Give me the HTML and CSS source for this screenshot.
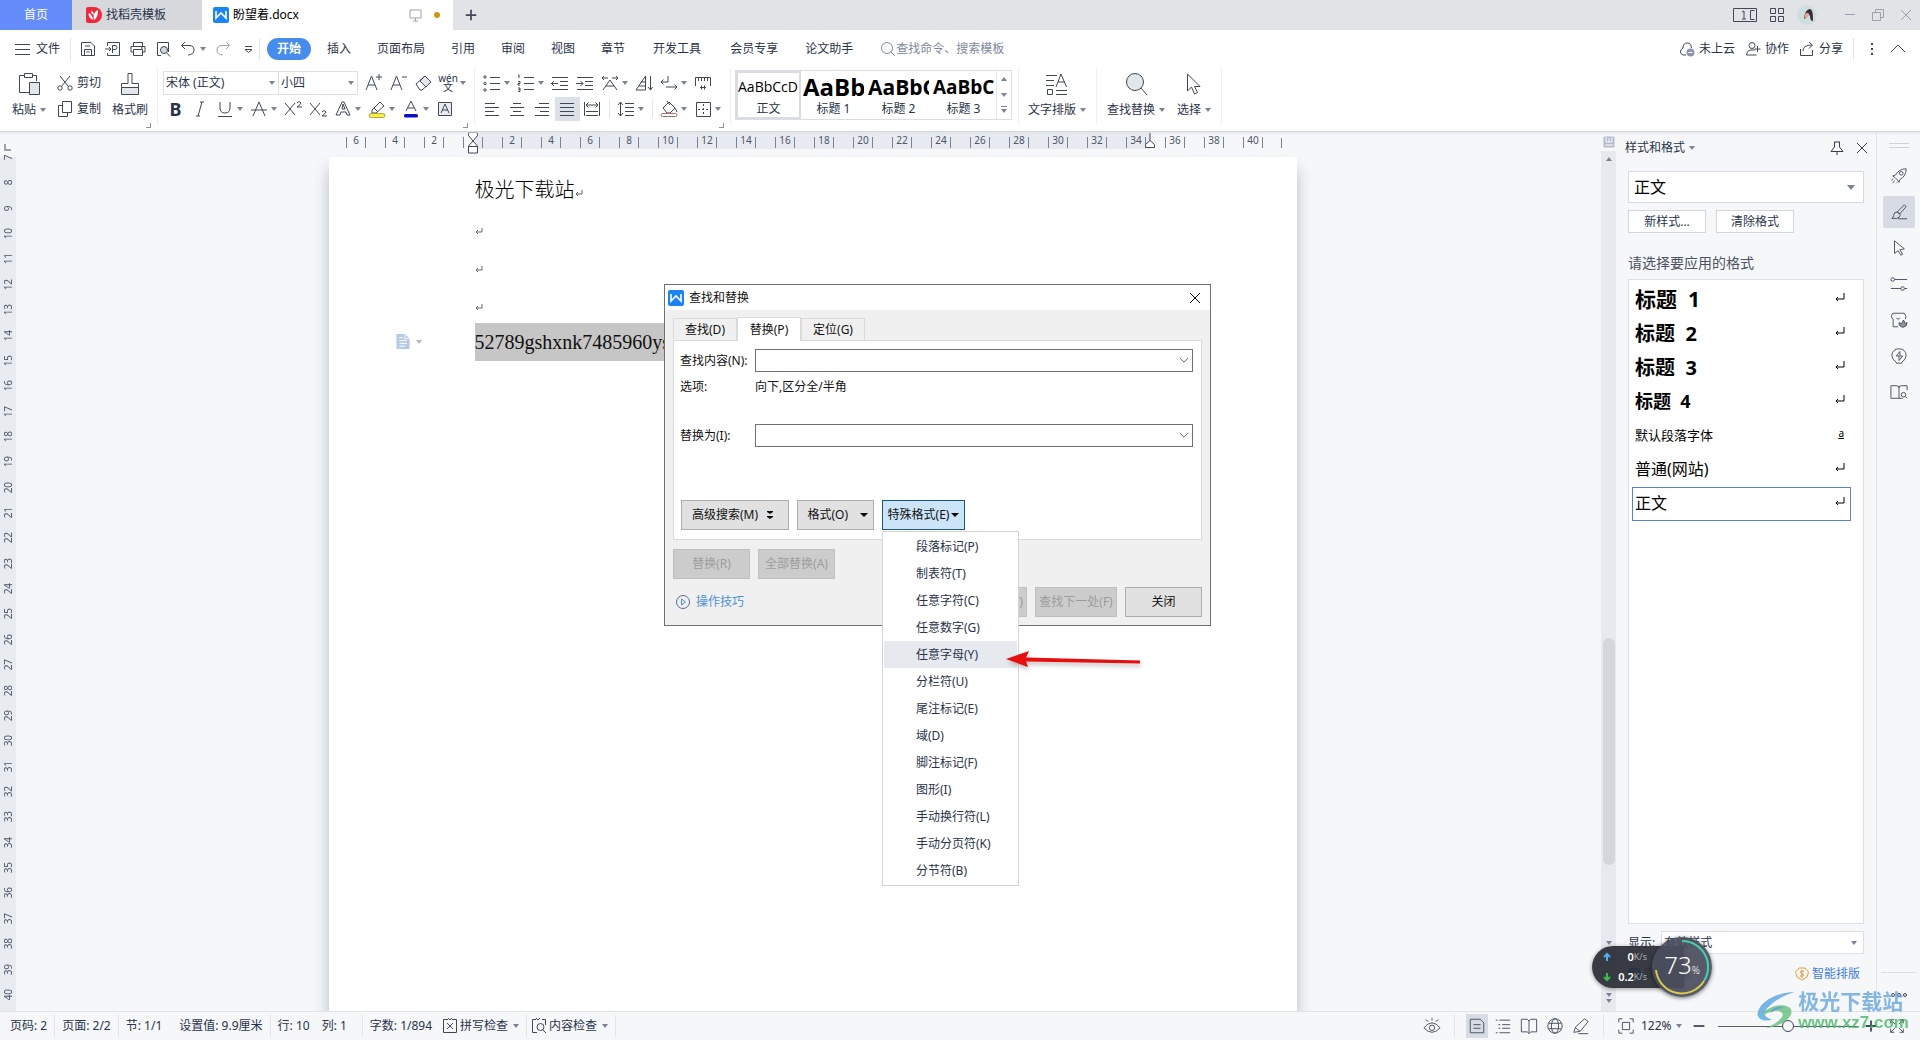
FILE: index.html
```html
<!DOCTYPE html>
<html lang="zh-CN">
<head>
<meta charset="utf-8">
<title>盼望着.docx</title>
<link rel="stylesheet" href="styles.css">
</head>
<body>
<div class="app">
<header class="titlebar">
  <button class="home-tab">首页</button>
  <button class="tab tab-docer"><svg class="logo" viewBox="0 0 16 16"><path d="M0 2q0-2 2-2h6a8 8 0 0 1 0 16H2q-2 0-2-2z" fill="#f2263d"/><path d="M7 13C3 11 2 8 3 6c2 1 4 4 4 7zM8 13C7 9 8 5 12 3c0 5-1 8-4 10zM5 4c2 0 3 2 3 4-2-1-3-2-3-4z" fill="#fff"/></svg>找稻壳模板</button>
  <button class="tab tab-active"><svg class="logo" viewBox="0 0 16 16"><rect width="16" height="16" rx="2" fill="#1c83f7"/><path d="M3 4v7l5-5 5 5V4" fill="none" stroke="#fff" stroke-width="1.6"/></svg><span class="grow">盼望着.docx</span><svg class="i16 faint" viewBox="0 0 16 16"><path d="M2 3h11v8H2zM7.500 11v3M5 14h5"/></svg><i class="unsaved"></i></button>
  <button class="new-tab" aria-label="新建"><svg class="i16 bold" viewBox="0 0 16 16"><path d="M8 2v12M2 8h12"/></svg></button>
  <div class="window-tools">
    <svg class="i24" viewBox="0 0 24 16"><path d="M.5 1.500h23v13H.5zM21.500 3.500h-4v9h4M9 5l2-1v8M9 12h4"/></svg>
    <svg class="i16" viewBox="0 0 16 16"><path d="M1.500 1.500h5v5h-5zM9.500 1.500h5v5h-5zM1.500 9.500h5v5h-5zM9.500 9.500h5v5h-5z"/></svg>
    <svg class="avatar" viewBox="0 0 20 20"><circle cx="10" cy="10" r="10" fill="#cfdedd"/><path d="M7 13c0-4 3-9 6-9 3 1 3 6 3 12-2 0-3-2-3-5l-2-3-3 6z" fill="#3a2c33"/><path d="M8 9q3-3 4 1l-3 4q-3-2-1-5z" fill="#dda793"/></svg>
    <i class="vline"></i>
    <button aria-label="最小化"><svg class="i16 faint" viewBox="0 0 16 16"><path d="M3 7.500h10"/></svg></button>
    <button aria-label="还原"><svg class="i16 faint" viewBox="0 0 16 16"><path d="M2.500 5.500h8v8h-8zM5.500 5V2.500h8v8H11"/></svg></button>
    <button aria-label="关闭"><svg class="i16 faint" viewBox="0 0 16 16"><path d="M3 3l10 10M13 3L3 13"/></svg></button>
  </div>
</header>

<nav class="menubar">
  <button class="file-menu"><svg class="i16" viewBox="0 0 16 16"><path d="M0 3.500h15M0 8.500h15M0 13.500h15"/></svg>文件</button>
  <i class="vline"></i>
  <div class="quick">
    <button aria-label="保存"><svg class="i16" viewBox="0 0 16 16"><path d="M1.500 1.500H11L14.500 5v9.500h-13zM4.500 14V8.500h7V14M5 5h5M6.500 11h3"/></svg></button>
    <button aria-label="输出PDF"><svg class="i16" viewBox="0 0 16 16"><path d="M2.500 5V1.500h12v13h-12V12M0 8h6M4 6l2 2-2 2M7.500 12V4.500H10q2 0 2 2t-2 2H8"/></svg></button>
    <button aria-label="打印"><svg class="i16" viewBox="0 0 16 16"><path d="M3.500 5V1.500h9V5M3 11H1V5.500h14V11h-2M3.500 8.500h9v6h-9zM11 7h2"/></svg></button>
    <button aria-label="打印预览"><svg class="i16" viewBox="0 0 16 16"><path d="M6 14.500H2.500v-13h11V11M12 12l3 3.500"/><circle cx="9" cy="9" r="3.500" fill="#d5d9e0"/></svg></button>
    <button class="dd" aria-label="撤销"><svg class="i16" viewBox="0 0 16 16"><path d="M5 1L1.500 4.500 5 8M2 4.500h7q5 0 5 4.500t-6 5"/></svg></button>
    <button aria-label="恢复"><svg class="i16 faint" viewBox="0 0 16 16"><path d="M11 1l3.500 3.500L11 8M14 4.500H7Q2 4.500 2 9t6 5"/></svg></button>
    <button aria-label="更多"><svg class="i16" viewBox="0 0 16 16"><path d="M5 5.500h7M5 8.500h7l-3.500 3z"/></svg></button>
  </div>
  <i class="vline"></i>
  <button class="menu on">开始</button>
  <button class="menu">插入</button><button class="menu">页面布局</button><button class="menu">引用</button><button class="menu">审阅</button><button class="menu">视图</button><button class="menu">章节</button><button class="menu wide">开发工具</button><button class="menu wide">会员专享</button><button class="menu">论文助手</button>
  <label class="search"><svg class="i16" viewBox="0 0 16 16"><circle cx="7" cy="7" r="5.500"/><path d="M11 11l4 4"/></svg><input type="text" placeholder="查找命令、搜索模板"></label>
  <div class="account">
    <button><svg class="i16" viewBox="0 0 16 16"><path d="M7 14H4q-3-1-2.500-4Q2 8 4 7q0-5 4.500-5Q12 2 12.500 7"/><circle cx="11.500" cy="11.500" r="4" fill="#8d97b0" stroke="none"/><path d="M9.500 11.500h4" stroke="#fff"/></svg>未上云</button>
    <button><svg class="i16" viewBox="0 0 16 16"><circle cx="7" cy="4.500" r="3"/><path d="M10 9H5q-3.500 1-3.500 5h10M12.500 5v6M9.500 8h6"/></svg>协作</button>
    <button><svg class="i16" viewBox="0 0 16 16"><path d="M1.500 8v6.500h12V9M4 10q0-6 9-6M10 1l3.500 3L10 7.500"/></svg>分享</button>
    <i class="vline"></i>
    <button aria-label="更多"><svg class="i16 dots" viewBox="0 0 16 16"><path d="M7 3h2M7 8h2M7 13h2"/></svg></button>
    <button aria-label="折叠"><svg class="i16" viewBox="0 0 16 16"><path d="M1 11l7-7 7 7"/></svg></button>
  </div>
</nav>

<section class="ribbon">
  <div class="group clip">
    <button class="big paste"><svg class="i24" viewBox="0 0 24 24"><path d="M8 3.500H2.500v17H12M16 3.500h3.500V9M7.500 1.500h8v4h-8z"/><path d="M12.500 10.500h10v12h-10z" fill="#e3e6ea"/></svg><span class="dd">粘贴</span></button>
    <div class="stack">
      <button class="line"><svg class="i16" viewBox="0 0 16 16"><path d="M3 1l8.500 10.500M13 1L4.500 11.500"/><circle cx="3" cy="13" r="2.200"/><circle cx="13" cy="13" r="2.200"/></svg>剪切</button>
      <button class="line"><svg class="i16" viewBox="0 0 16 16"><path d="M5.500.5h9v11h-9zM5 4.500H1.500v11h9V12"/></svg>复制</button>
    </div>
    <button class="big"><svg class="i24" viewBox="0 0 24 24"><path d="M3.500 16v-4.500H10v-10h4v10h6.500V16"/><path d="M3.500 15.500h17v7h-17z" fill="#e3e6ea"/></svg><span>格式刷</span></button>
    <i class="corner"></i>
  </div>
  <div class="group font-group">
    <div class="row">
      <div class="font-boxes"><span class="sel"><select aria-label="字体"><option>宋体 (正文)</option></select></span><span class="sel size"><select aria-label="字号"><option>小四</option></select></span></div>
      <button class="t" aria-label="增大字号"><svg viewBox="0 0 20 20"><path d="M3 17L8.500 3 14 17M5 12h7M16 1v6M13 4h6"/></svg></button>
      <button class="t" aria-label="减小字号"><svg viewBox="0 0 20 20"><path d="M3 17L8.500 3 14 17M5 12h7M14 4h5"/></svg></button>
      <button class="t" aria-label="清除格式"><svg viewBox="0 0 20 20"><path d="M3 11L12 3l6 6-9 8H7z"/><path d="M7 8l6 6 5-5-6-6z" fill="#e3e6ea"/></svg></button>
      <button class="t dd pinyin" aria-label="拼音指南"><span>wén<br>文</span></button>
    </div>
    <div class="row">
      <button class="t glyph"><b>B</b></button>
      <button class="t" aria-label="倾斜"><svg viewBox="0 0 20 20"><path d="M12 3L8 17M10 3h4M6 17h4"/></svg></button>
      <button class="t dd" aria-label="下划线"><svg viewBox="0 0 20 20"><path d="M5 3v6q0 5 5 5t5-5V3M3 17.500h14"/></svg></button>
      <button class="t dd" aria-label="删除线"><svg viewBox="0 0 20 20"><path d="M4 17l6-14 6 14M2 11h16"/></svg></button>
      <button class="t" aria-label="上标"><svg viewBox="0 0 20 20"><path d="M2 4l10 12M12 4L2 16M14 4q2-3 4 0 0 1-4 4h5"/></svg></button>
      <button class="t" aria-label="下标"><svg viewBox="0 0 20 20"><path d="M2 4l10 12M12 4L2 16M14 13q2-3 4 0 0 1-4 4h5"/></svg></button>
      <button class="t dd" aria-label="文字效果"><svg viewBox="0 0 20 20"><path d="M3 16L9 3h2l6 13h-3l-1-3H8l-1 3zM9 10h3l-2-5z"/></svg></button>
      <button class="t dd" aria-label="突出显示"><svg viewBox="0 0 20 20"><path d="M5 11l8-8 4 4-8 7H5zM7 9l4 4"/><rect x="2" y="14.500" width="16" height="4" rx="2" fill="#ffef3a" stroke="#77701f" stroke-width=".6"/></svg></button>
      <button class="t dd" aria-label="字体颜色"><svg viewBox="0 0 20 20"><path d="M5 12l5-10 5 10M7 9h6"/><rect x="3" y="15" width="14" height="3.500" rx="1.500" fill="#0a10c4" stroke="none"/></svg></button>
      <button class="t" aria-label="字符底纹"><svg viewBox="0 0 20 20"><path d="M3.500 3.500h13v13h-13z" fill="#e9ebef"/><path d="M6 14l4-9 4 9M7 11h6"/></svg></button>
    </div>
    <i class="corner"></i>
  </div>
  <div class="group para-group">
    <div class="row">
      <button class="t dd" aria-label="项目符号"><svg viewBox="0 0 20 20"><path d="M8 4.500h10M8 10.500h10M8 16.500h10"/><circle cx="3" cy="4" r="1.200"/><circle cx="3" cy="10.500" r="1.200"/><circle cx="3" cy="17" r="1.200"/></svg></button>
      <button class="t dd" aria-label="编号"><svg viewBox="0 0 20 20"><path d="M8 4.500h10M8 10.500h10M8 16.500h10M2 2h1v3M2 8.500h2v2H2v1.500h2M2 15h2v1.500H2.500M4 16.500v2H2"/></svg></button>
      <button class="t" aria-label="减少缩进"><svg viewBox="0 0 20 20"><path d="M2 4.500h16M10 8.500h8M10 12.500h8M2 16.500h16M1 10.500h7M4 8l-2.500 2.500L4 13"/></svg></button>
      <button class="t" aria-label="增加缩进"><svg viewBox="0 0 20 20"><path d="M2 4.500h16M10 8.500h8M10 12.500h8M2 16.500h16M1 10.500h7M5.500 8L8 10.500 5.500 13"/></svg></button>
      <button class="t dd" aria-label="中文版式"><svg viewBox="0 0 20 20"><path d="M3 17l7-10 7 10M6 13h8M2 5h6M12 5h6M4 3L2 5l2 2M16 3l2 2-2 2"/></svg></button>
      <button class="t" aria-label="排序"><svg viewBox="0 0 20 20"><path d="M11.500 3v14H2zM5 13h6M7 9h4M16.500 3v14M14 14l2.500 3 2-3"/></svg></button>
      <button class="t dd" aria-label="换行符"><svg viewBox="0 0 20 20"><path d="M9 3v6H2M4.500 6.500L2 9l2.500 2.500M7 14h11M15.500 11.500L18 14l-2.500 2.500"/></svg></button>
      <button class="t" aria-label="标尺"><svg viewBox="0 0 20 20"><path d="M2.500 13V4.500h15V13M5.500 5v3M8.500 5v3M11.500 5v3M14.500 5v3M7 14.500h6M8.500 12.500v4M11.500 12.500v4"/></svg></button>
    </div>
    <div class="row">
      <button class="t" aria-label="左对齐"><svg viewBox="0 0 20 20"><path d="M3 4.500h10M3 8.500h14M3 12.500h9M3 16.500h14"/></svg></button>
      <button class="t" aria-label="居中"><svg viewBox="0 0 20 20"><path d="M6 4.500h8M3 8.500h14M6 12.500h8M3 16.500h14"/></svg></button>
      <button class="t" aria-label="右对齐"><svg viewBox="0 0 20 20"><path d="M7 4.500h10M3 8.500h14M8 12.500h9M3 16.500h14"/></svg></button>
      <button class="t on" aria-label="两端对齐"><svg viewBox="0 0 20 20"><path d="M3 4.500h14M3 8.500h14M3 12.500h14M3 16.500h14"/></svg></button>
      <button class="t" aria-label="分散对齐"><svg viewBox="0 0 20 20"><path d="M2.500 3v14M17.500 3v14M4 12.500h12M4 16.500h12M4 6h12M6.500 3.500L4 6l2.500 2.500M13.500 3.500L16 6l-2.500 2.500"/></svg></button>
      <i class="vline small"></i>
      <button class="t dd" aria-label="行距"><svg viewBox="0 0 20 20"><path d="M9 4.500h9M9 8.500h9M9 12.500h9M9 16.500h9M4.500 3v14M2 6l2.500-3L7 6M2 14l2.500 3L7 14"/></svg></button>
      <i class="vline small"></i>
      <button class="t dd" aria-label="底纹"><svg viewBox="0 0 20 20"><path d="M4 9l6-6 6 6-5 5H8zM8 2l3 4M16 9l2 4"/><rect x="2" y="14.500" width="16" height="3" rx="1.500" fill="#fff" stroke="#b66"/></svg></button>
      <button class="t dd" aria-label="边框"><svg viewBox="0 0 20 20"><path d="M3.500 3.500h14v14h-14z"/><path d="M10.500 5v11M5 10.500h11" stroke-dasharray="2 2"/></svg></button>
    </div>
    <i class="corner"></i>
  </div>
  <div class="group gallery-group">
    <div class="gallery">
      <button class="style on"><span class="s1">AaBbCcD</span>正文</button>
      <button class="style"><span class="s2">AaBb</span>标题 1</button>
      <button class="style"><span class="s3">AaBbC</span>标题 2</button>
      <button class="style"><span class="s4">AaBbCc</span>标题 3</button>
      <div class="gallery-nav"><i class="up"></i><i class="down"></i><i class="down more"></i></div>
    </div>
  </div>
  <div class="group tool"><button class="big"><svg class="i24" viewBox="0 0 24 24"><path d="M1 3.500h11M1 8.500h8M1 13.500h8M11 15l5-13 5.500 13M13 10h7M2.500 17.500h5v5h-5zM11 18.500h11M11 22.500h11"/></svg><span class="dd">文字排版</span></button></div>
  <div class="group tool find">
    <button class="big"><svg class="i24" viewBox="0 0 24 24"><circle cx="11" cy="10" r="8.500" fill="#e3e6ea"/><path d="M17 16l6 7"/></svg><span class="dd">查找替换</span></button>
    <button class="big"><svg class="i24" viewBox="0 0 24 24"><path d="M5.500 2v17l4-4 3 7 3-1.500-3-6H18z"/></svg><span class="dd">选择</span></button>
  </div>
</section>

<main class="work">
  <div class="vruler"><i class="origin"></i><span>7</span><span>8</span><span>9</span><span>10</span><span>11</span><span>12</span><span>13</span><span>14</span><span>15</span><span>16</span><span>17</span><span>18</span><span>19</span><span>20</span><span>21</span><span>22</span><span>23</span><span>24</span><span>25</span><span>26</span><span>27</span><span>28</span><span>29</span><span>30</span><span>31</span><span>32</span><span>33</span><span>34</span><span>35</span><span>36</span><span>37</span><span>38</span><span>39</span><span>40</span></div>
  <div class="canvas">
    <div class="column">
      <div class="hruler">
        <span>6</span><span>4</span><span>2</span><span><svg class="indent" viewBox="0 0 12 22"><path d="M1.500.5h9v3L6 9l4.500 5v7h-9v-7L6 9 1.500 3.500zM1.500 14.500h9"/></svg></span><span>2</span><span>4</span><span>6</span><span>8</span><span>10</span><span>12</span><span>14</span><span>16</span><span>18</span><span>20</span><span>22</span><span>24</span><span>26</span><span>28</span><span>30</span><span>32</span><span>34</span><span>36</span><span>38</span><span>40</span>
        <svg class="right-indent" viewBox="0 0 12 16"><path d="M6 0v8l4.500 4v3h-9v-3L6 8"/></svg>
      </div>
      <article class="page">
        <p>极光下载站<svg class="ret" viewBox="0 0 8 8"><path d="M7 1v4H1M3 3L1 5l2 2"/></svg></p>
        <p><svg class="ret" viewBox="0 0 8 8"><path d="M7 1v4H1M3 3L1 5l2 2"/></svg></p>
        <p><svg class="ret" viewBox="0 0 8 8"><path d="M7 1v4H1M3 3L1 5l2 2"/></svg></p>
        <p><svg class="ret" viewBox="0 0 8 8"><path d="M7 1v4H1M3 3L1 5l2 2"/></svg></p>
        <p class="picked"><span class="smart dd"><svg viewBox="0 0 14 16"><path d="M0 0h9l5 5v11H0z" fill="#b7cae3"/><path d="M3 4h4M3 7h8M3 10h8M3 13h6M9 1v4h4" stroke="#fff"/></svg></span><mark>52789gshxnk7485960ys</mark></p>
      </article>
    </div>
  </div>
  <div class="scroll">
    <svg class="ruler-toggle" viewBox="0 0 12 12"><rect x=".5" y=".5" width="11" height="11" rx="1" fill="#b4bacb" stroke="none"/><path d="M3 1v5h6V1M6 2v4M2 9h8" stroke="#fff"/></svg>
    <div class="track"><i class="up"></i><i class="thumb"></i><i class="down"></i><i class="down pages"></i><i class="down"></i></div>
  </div>
  <aside class="panel">
    <div class="panel-head"><span class="dd grow">样式和格式</span><svg class="i16" viewBox="0 0 16 16"><path d="M5 2h6M5.500 2v5L2 11.500h12L10.500 7V2M8 12v3"/></svg><svg class="i16" viewBox="0 0 16 16"><path d="M3 3l10 10M13 3L3 13"/></svg></div>
    <div class="panel-body">
      <span class="sel current"><select aria-label="当前样式"><option>正文</option></select></span>
      <div class="pair"><button class="box">新样式...</button><button class="box">清除格式</button></div>
      <h2>请选择要应用的格式</h2>
      <ul class="styles">
        <li class="h1"><span>标题  1</span><svg viewBox="0 0 10 10"><path d="M9 0v6H1M3 4L1 6l2 2"/></svg></li>
        <li class="h2"><span>标题  2</span><svg viewBox="0 0 10 10"><path d="M9 0v6H1M3 4L1 6l2 2"/></svg></li>
        <li class="h2"><span>标题  3</span><svg viewBox="0 0 10 10"><path d="M9 0v6H1M3 4L1 6l2 2"/></svg></li>
        <li class="h4"><span>标题  4</span><svg viewBox="0 0 10 10"><path d="M9 0v6H1M3 4L1 6l2 2"/></svg></li>
        <li class="small"><span>默认段落字体</span><u>a</u></li>
        <li><span>普通(网站)</span><svg viewBox="0 0 10 10"><path d="M9 0v6H1M3 4L1 6l2 2"/></svg></li>
        <li class="chosen"><span>正文</span><svg viewBox="0 0 10 10"><path d="M9 0v6H1M3 4L1 6l2 2"/></svg></li>
      </ul>
      <div class="show"><label for="show">显示:</label><span class="sel"><select id="show"><option>有效样式</option></select></span></div>
      <div class="foot"><label><input type="checkbox" checked>显示预览</label><a href="#layout"><svg viewBox="0 0 14 14"><path d="M4 1h6l3.500 4L12 10l-5 3-5-3L.5 5z"/><path d="M9 4H6q-1 1 0 2l2 1q1 1 0 2H5M7 3v8"/></svg>智能排版</a></div>
    </div>
  </aside>
  <nav class="side">
    <i class="grip"></i>
    <button aria-label="快捷"><svg viewBox="0 0 20 20"><path d="M6 9q4-7 12-7 0 8-7 12l-1 3-2-3-2-2-3-2zM3 13l-1 2M5 15l-2 3M8 17l-1 1"/><circle cx="12.500" cy="7" r="2"/></svg></button>
    <button class="on" aria-label="样式"><svg viewBox="0 0 20 20"><path d="M8 10l8-8 2 2-7 8zM8 10q-4 0-4 4 0 2-2 3 6 1 8-1 2-2 1-4zM9 17.500h10"/></svg></button>
    <button aria-label="选择"><svg viewBox="0 0 20 20"><path d="M5 2v14l4-3 3 5 2-1-3-5 5-1z"/></svg></button>
    <button aria-label="属性"><svg viewBox="0 0 20 20"><circle cx="3" cy="5" r="2"/><circle cx="14" cy="15" r="2"/><path d="M5 5h14M1 15h11M16 15h3"/></svg></button>
    <button aria-label="稻壳"><svg viewBox="0 0 20 20"><path d="M9 17.500H3.500V9Q0 7 3 2.500h13Q19 6 17 9M7 8q2 2 4 0"/><path d="M10 13q0 5 5 5 4-1 4-5l-2 1-2-4-2 4z" fill="#8d95a5"/></svg></button>
    <button aria-label="技巧"><svg viewBox="0 0 20 20"><path d="M7 17q-5-3-5-8 1-7 8-7t8 7q0 5-5 8v1H7zM11 5l-4 5h3v5l4-5h-3z"/></svg></button>
    <button aria-label="查阅"><svg viewBox="0 0 20 20"><path d="M10 4v13H1V3h6q3 0 3 2 0-2 3-2h6v5M10 17h4"/><circle cx="15" cy="13" r="2.500"/><path d="M17 15l2 2"/></svg></button>
    <i class="rule"></i>
    <svg class="more-tools" viewBox="0 0 20 8"><circle cx="4" cy="4" r="1.500"/><circle cx="10" cy="4" r="1.500"/><circle cx="16" cy="4" r="1.500"/></svg>
  </nav>
</main>

<footer class="status">
  <span>页码: 2</span><i class="vline"></i><span>页面: 2/2</span><i class="vline"></i><span>节: 1/1</span><span class="after">设置值: 9.9厘米</span><i class="vline"></i><span>行: 10</span><span class="near">列: 1</span><i class="vline"></i><span>字数: 1/894</span>
  <button class="dd"><svg class="i16" viewBox="0 0 16 16"><path d="M6 1.500H1.500v13h13v-13H10M6 0l2 2 2-2M5 5l6 6M11 5l-6 6"/></svg>拼写检查</button><i class="vline"></i>
  <button class="dd"><svg class="i16" viewBox="0 0 16 16"><path d="M5 1.500H1.500v13H6M11 1.500h3.500V7M5 0l2 2 2-2M12 12l3 3"/><circle cx="9.500" cy="9" r="3.500"/></svg>内容检查</button><i class="vline"></i>
  <div class="views">
    <button aria-label="护眼"><svg viewBox="0 0 20 20"><path d="M1 12q9-11 18 0-9 10-18 0zM10 1v3M3 3l3 2M17 3l-3 2"/><circle cx="10" cy="12" r="3"/></svg></button><i class="vline"></i>
    <button class="on" aria-label="页面视图"><svg viewBox="0 0 20 20"><path d="M2.500 2.500h11l4 4v11h-15zM6 8.500h8M6 12.500h8"/></svg></button>
    <button aria-label="大纲"><svg viewBox="0 0 20 20"><path d="M2 3.500h2M6 3.500h12M5 8.500h2M9 8.500h9M5 12.500h2M9 12.500h9M2 17.500h2M6 17.500h12"/></svg></button>
    <button aria-label="阅读版式"><svg viewBox="0 0 20 20"><path d="M10 4.500L8 2.500H1.500v14H8l2 2 2-2h6.500v-14H12zV18"/></svg></button>
    <button aria-label="Web版式"><svg viewBox="0 0 20 20"><circle cx="10" cy="10" r="8"/><ellipse cx="10" cy="10" rx="4" ry="8"/><path d="M3 7h14M3 13h14"/></svg></button>
    <button aria-label="写作模式"><svg viewBox="0 0 20 20"><path d="M2 17l2-6 10-9 4 3-9 11zM4 12l5 4M7 18.500h11"/></svg></button><i class="vline"></i>
    <button aria-label="缩放"><svg viewBox="0 0 20 20"><path d="M2 6V2h4M14 2h4v4M18 14v4h-4M6 18H2v-4M6 6h8v8H6z"/></svg></button>
    <button class="dd zoom">122%</button>
    <button aria-label="缩小"><svg class="bold" viewBox="0 0 20 20"><path d="M4 10h12"/></svg></button>
    <input type="range" min="0" max="100" value="50" aria-label="显示比例">
    <button aria-label="放大"><svg class="bold" viewBox="0 0 20 20"><path d="M4 10h12M10 4v12"/></svg></button>
    <button aria-label="全屏"><svg viewBox="0 0 20 20"><path d="M3 7V3h4M13 3h4v4M17 13v4h-4M7 17H3v-4M3 3l5 5M17 3l-5 5M17 17l-5-5M3 17l5-5"/></svg></button>
  </div>
</footer>

<section class="dialog" role="dialog" aria-label="查找和替换">
  <header><svg class="logo" viewBox="0 0 16 16"><rect width="16" height="16" rx="2" fill="#1c83f7"/><path d="M3 4v7l5-5 5 5V4" fill="none" stroke="#fff" stroke-width="1.600"/></svg><span class="grow">查找和替换</span><button aria-label="关闭"><svg class="i16 black" viewBox="0 0 16 16"><path d="M3 3l10 10M13 3L3 13"/></svg></button></header>
  <div class="dialog-body">
    <div class="tabs"><button>查找(D)</button><button class="on">替换(P)</button><button>定位(G)</button></div>
    <div class="sheet">
      <div class="field"><label for="find">查找内容(N):</label><span class="combo"><input id="find" type="text"><svg viewBox="0 0 12 8"><path d="M1 1l5 5 5-5"/></svg></span></div>
      <div class="field info"><span>选项:</span><span>向下,区分全/半角</span></div>
      <div class="field second"><label for="repl">替换为(I):</label><span class="combo"><input id="repl" type="text"><svg viewBox="0 0 12 8"><path d="M1 1l5 5 5-5"/></svg></span></div>
      <div class="formats">
        <button class="btn adv">高级搜索(M)<svg viewBox="0 0 8 10"><path d="M1 1h6v1L4 4 1 2zM1 6h6v1L4 9 1 7z"/></svg></button>
        <button class="btn fmt">格式(O)<i class="down"></i></button>
        <span class="anchor"><button class="btn special">特殊格式(E)<i class="down"></i></button>
          <menu class="popup"><li>段落标记(P)</li><li>制表符(T)</li><li>任意字符(C)</li><li>任意数字(G)</li><li class="on">任意字母(Y)</li><li>分栏符(U)</li><li>尾注标记(E)</li><li>域(D)</li><li>脚注标记(F)</li><li>图形(I)</li><li>手动换行符(L)</li><li>手动分页符(K)</li><li>分节符(B)</li></menu>
        </span>
      </div>
    </div>
    <div class="actions"><button class="btn off" disabled>替换(R)</button><button class="btn off" disabled>全部替换(A)</button></div>
    <div class="actions last"><a href="#tips"><svg class="i16" viewBox="0 0 16 16"><circle cx="8" cy="8" r="6.500" stroke="#5b6b8d"/><path d="M6.500 5l4 3-4 3z" stroke="#4a90e2"/></svg>操作技巧</a><button class="btn off prev" disabled>查找上一处(V)</button><button class="btn off next" disabled>查找下一处(F)</button><button class="btn">关闭</button></div>
  </div>
</section>

<svg class="pointer" viewBox="0 0 144 28"><path d="M3 10L26 2l-3 6.500L137 11.500v3L23 12.500 25 18z" fill="#e60e0e"/></svg>

<div class="brand">
  <svg viewBox="0 0 44 40"><path d="M43 1C24 2 8 10 4 22c-2 7 6 11 15 8-9-2-10-8-3-14C22 10 31 5 43 1z" fill="#5aa5e0"/><path d="M8 27c4-12 27-16 31-7 2 8-10 17-27 19 12-5 19-11 18-15-2-5-13-4-22 3z" fill="#63bf7c"/><path d="M17 23c1-5 10-8 15-5-6 0-10 2-15 5z" fill="#3e8fd8"/></svg>
  <div><b>极光下载站</b><em>www.xz7.com</em></div>
</div>

<div class="meter">
  <div class="rates"><span><svg viewBox="0 0 10 10"><path d="M5 9V2M2 5l3-3 3 3" stroke="#4fb0ee"/></svg><b>0</b><small>K/s</small></span><span><svg viewBox="0 0 10 10"><path d="M5 1v7M2 5l3 3 3-3" stroke="#3dbb4c"/></svg><b>0.2</b><small>K/s</small></span></div>
  <div class="dial"><svg viewBox="0 0 60 60"><path d="M30 4A26 26 0 0 1 52 44" stroke="#45cfae"/><path d="M52 44A26 26 0 0 1 4 33" stroke="#d9cc4c"/></svg><span>73<small>%</small></span></div>
</div>
</div>
</body>
</html>
```
FILE: styles.css
```css
* { box-sizing: border-box; }
body {
  margin: 0;
  font: 12px/16px "Noto Sans", "Noto Sans CJK SC", sans-serif;
  color: #29334b;
  background: #f5f7f9;
}
button, input, select { font: inherit; color: inherit; }
button { border: 0; padding: 0; background: none; white-space: nowrap; }
a { color: #3c7de0; text-decoration: none; }
svg { display: block; flex: none; fill: none; stroke: #3f4759; stroke-width: 1; }
.app { position: relative; display: flex; flex-direction: column; height: 100vh; min-height: 640px; overflow: hidden; }
.grow { flex: 1; text-align: left; }
.logo, .i16 { width: 16px; height: 16px; }
.logo { stroke: none; }
.i24 { width: 24px; height: 24px; }
.faint { stroke: #9ba1b1; }
.bold { stroke-width: 2; }
.black { stroke: #000; }
.vline { flex: none; width: 1px; height: 22px; background: #e1e4e9; }
.up, .down { width: 0; height: 0; border: 3px solid transparent; }
.down { border-top: 4px solid #7a8296; border-bottom: 0; }
.up { border-bottom: 4px solid #7a8296; border-top: 0; }
.dd { display: flex; align-items: center; }
.dd::after { content: ""; margin-left: 4px; border: 3px solid transparent; border-top: 4px solid #7a8296; border-bottom: 0; }

/* title bar */
.titlebar { display: flex; flex: none; height: 30px; background: #e1e3e7; }
.home-tab { width: 72px; color: #fff; background: #648dfb; }
.tab { display: flex; align-items: center; gap: 4px; padding: 0 14px; }
.tab-docer { width: 130px; background: #d6d8db; }
.tab-active { width: 251px; padding: 0 13px 0 11px; background: #fff; color: #000; }
.tab-active .i16 { margin-right: 6px; }
.unsaved { width: 6px; height: 6px; border-radius: 3px; background: #d3970f; }
.new-tab { width: 36px; display: grid; place-items: center; }
.new-tab svg { width: 14px; height: 14px; }
.window-tools { display: flex; align-items: center; gap: 12px; margin-left: auto; padding-right: 6px; }
.window-tools .i24 { height: 16px; }
.avatar { width: 20px; height: 20px; stroke: none; }

/* menu bar */
.menubar { display: flex; flex: none; align-items: center; height: 38px; background: #fff; }
.file-menu { display: flex; align-items: center; gap: 5px; width: 70px; padding-left: 15px; }
.quick { display: flex; align-items: center; gap: 9px; width: 188px; padding-left: 9px; }
.menu { height: 22px; padding: 0 13px; }
.menu.wide { padding: 0 14px 0 15px; }
.menu.on { margin: 0 3px 0 7px; padding: 0 10px; border-radius: 11px; color: #fff; background: #468ced; font-weight: 700; }
.search { display: flex; align-items: center; gap: 0; margin-left: 14px; color: #7d879e; }
.search svg { stroke: #7d879e; }
.search input { width: 150px; padding: 0; border: 0; outline: 0; background: none; }
.search input::placeholder { color: #7d879e; opacity: 1; }
.account { display: flex; align-items: center; gap: 10px; margin-left: auto; padding-right: 14px; }
.account button { display: flex; align-items: center; gap: 4px; }
.account .dots { stroke-width: 2; }

/* ribbon */
.ribbon { display: flex; flex: none; height: 64px; background: #fff; border-bottom: 1px solid #d8dbdf; box-shadow: 0 1px 2px #dfe2e6; z-index: 1; }
.group { position: relative; display: flex; height: 56px; border-right: 1px solid #eceef1; }
.corner { position: absolute; right: 6px; bottom: -4px; width: 5px; height: 5px; border: solid #8b92a3; border-width: 0 1px 1px 0; }
.clip { width: 158px; padding: 2px 8px 0 12px; gap: 11px; }
.big { display: flex; flex-direction: column; align-items: center; gap: 6px; height: 50px; padding-top: 2px; }
.stack, .font-group, .para-group { display: flex; flex-direction: column; gap: 1px; }
.line { display: flex; align-items: center; gap: 4px; height: 25px; }
.row { display: flex; align-items: center; height: 25px; }
.font-group { width: 317px; padding: 2px 0 0 5px; }
.para-group { width: 256px; padding: 2px 0 0 5px; }
.t { width: 25px; height: 24px; padding-left: 2px; }
.t svg { width: 20px; height: 20px; }
.t.dd { width: 34px; flex: none; }
.t.dd::after { margin-left: 2px; }
.t.on { background: #dce0e7; }
.glyph { padding: 0; font-size: 18px; }
.pinyin span { width: 20px; font-size: 10px; line-height: 9px; }
.vline.small { height: 18px; margin: 0 4px; }
.font-boxes { display: flex; width: 195px; height: 24px; margin-right: 3px; border: 1px solid #dcdfe4; }
.sel { position: relative; display: block; flex: 1; }
.sel::after { content: ""; position: absolute; right: 6px; top: 50%; margin-top: -2px; border: 3px solid transparent; border-top: 4px solid #7a8296; border-bottom: 0; }
.sel select { appearance: none; width: 100%; height: 100%; padding: 0 2px; border: 0; border-radius: 0; background: none; outline: 0; }
.sel.size { flex: none; width: 79px; border-left: 1px solid #dcdfe4; }
.sel.size::after, .font-boxes .sel::after { right: 3px; }
.gallery-group { width: 288px; padding: 2px 6px 0 4px; }
.gallery { display: flex; flex: 1; height: 50px; border: 1px solid #dadde2; }
.style { display: flex; flex-direction: column; align-items: center; width: 65px; padding-top: 2px; overflow: hidden; }
.style.on { border: 2px solid #d9dce2; padding-top: 0; }
.style span { height: 28px; color: #000; line-height: 28px; width: 61px; overflow: hidden; text-align: left; font-family: "Open Sans", sans-serif; }
.s1 { font-size: 14px; }
.style .s2, .style .s3, .style .s4 { font-weight: 700; }
.s2 { font-size: 24px; }
.s3 { font-size: 21px; }
.s4 { font-size: 19px; }
.gallery-nav { flex: 1; display: flex; flex-direction: column; align-items: center; justify-content: space-around; border-left: 1px solid #e6e8ec; }
.more { position: relative; }
.more::before { content: ""; position: absolute; left: -3px; top: -7px; width: 6px; height: 1px; background: #7a8296; }
.tool { padding: 2px 10px 0 9px; }
.find { gap: 12px; padding-left: 10px; }

/* workspace */
.work { display: flex; flex: 1; min-height: 0; }
.vruler { display: flex; flex-direction: column; width: 16px; padding-bottom: 4px; background: #e8ecf1; font-size: 10px; color: #4d5569; }
.vruler .origin { position: relative; height: 25px; margin-bottom: -12px; background: #f5f7f9; }
.vruler .origin::after { content: ""; position: absolute; left: 4px; bottom: 6px; width: 5px; height: 5px; border: solid #9ba1b1; border-width: 0 0 2px 2px; }
.vruler span { flex: 1; display: grid; place-items: center; width: 16px; line-height: 16px; writing-mode: vertical-rl; transform: rotate(180deg); }
.canvas { display: flex; flex: 1; justify-content: center; padding-left: 8px; min-width: 0; overflow: hidden; }
.column { display: flex; flex-direction: column; width: 968px; flex: none; }
.hruler { position: relative; display: grid; grid-template-columns: repeat(24, 1fr); flex: none; height: 25px; margin: 0 24px 0 8px; padding-top: 5px; font-size: 10px; color: #4d5569; background: linear-gradient(#e7eaf0, #e7eaf0) 138px 0 / 676px 17px no-repeat; }
.hruler::after { content: ""; position: absolute; right: -9px; top: 6px; width: 1px; height: 10px; background: #7a8296; }
.hruler > span { justify-self: center; width: 20px; height: 11px; border: solid #7a8296; border-width: 0 1px; line-height: 7px; text-align: center; }
.indent { width: 12px; height: 22px; margin: -5px 0 0 3px; fill: #fff; }
.right-indent { position: absolute; left: 807px; top: 0; width: 12px; height: 17px; fill: #fff; }
.page { flex: 1; padding: 14px 146px; background: #fff; box-shadow: 0 12px 14px #b9bcc0; color: #000; font: 20px/38px "Liberation Serif", "Noto Sans CJK SC", serif; }
.page p { position: relative; display: flex; align-items: center; height: 38px; margin: 0; }
.page p:first-child { font-weight: 300; }
.ret { width: 8px; height: 8px; margin-top: 6px; stroke: #666; }
.page mark { padding-right: 8px; color: #111; background: #c6c6c6; }
.smart { position: absolute; left: -79px; top: 11px; }
.smart svg { width: 14px; height: 15px; stroke: none; }
.smart::after { margin-left: 6px; border-top-color: #b5bac5; }

.scroll { display: flex; flex-direction: column; align-items: center; width: 15px; padding-top: 4px; gap: 3px; }
.ruler-toggle { width: 12px; height: 12px; }
.track { display: flex; flex-direction: column; align-items: center; flex: 1; width: 15px; gap: 2px; padding: 6px 0 8px; background: #e8e9ee; }
.thumb { width: 12px; height: 227px; margin: auto 0 74px; border-radius: 6px; background: #d3d6db; }
.track .pages { margin-top: 46px; }
.panel { display: flex; flex-direction: column; width: 261px; border-right: 1px solid #e0e3e8; }
.panel-head { display: flex; align-items: center; gap: 9px; height: 31px; padding: 0 6px 0 9px; }
.panel-head svg { stroke: #353d50; }
.panel-body { display: flex; flex: 1; flex-direction: column; padding: 8px 12px 27px; }
.current { flex: none; height: 32px; border: 1px solid #d7dae0; background: #fff; color: #000; font-size: 16px; }
.current select { padding: 0 5px; }
.current::after { border-width: 4px; border-top-width: 5px; right: 8px; }
.pair { display: flex; gap: 10px; margin-top: 7px; }
.box { width: 78px; height: 23px; border: 1px solid #d3d6dc; background: #fff; }
.panel h2 { margin: 21px 0 7px; font-size: 14px; font-weight: 400; line-height: 18px; color: #4a5264; }
.styles { flex: 1; margin: 0; padding: 3px 12px 0 3px; border: 1px solid #dcdfe4; background: #fff; color: #000; list-style: none; font-size: 16px; }
.styles li { display: flex; justify-content: space-between; height: 34px; padding: 0 5px 0 2px; line-height: 31px; border: 1px solid transparent; white-space: pre; }
.styles svg { width: 10px; height: 10px; margin-top: 9px; stroke: #000; }
.styles u { margin-right: 1px; font-size: 10px; line-height: 26px; }
.styles .h1, .styles .h2, .styles .h4 { font-weight: 700; }
.h1 { font-size: 21px; }
.h2 { font-size: 20px; }
.h4 { font-size: 18px; }
.styles .small { font-size: 13px; }
.styles .chosen { border-color: #5286cb; }
.show { display: flex; align-items: center; gap: 6px; margin-top: 7px; }
.show .sel { height: 23px; border: 1px solid #dcdfe4; background: #fff; }
.foot { display: flex; justify-content: space-between; align-items: center; height: 20px; margin-top: 10px; padding-right: 4px; }
.foot label, .foot a { display: flex; align-items: center; gap: 3px; }
.foot input { width: 12px; height: 12px; margin: 0; }
.foot svg { width: 14px; height: 14px; stroke: #ee9b31; }
.side { display: flex; flex-direction: column; align-items: center; gap: 4px; width: 43px; padding: 11px 0 12px; }
.grip { width: 20px; height: 5px; margin-bottom: 8px; border: solid #cfd2d8; border-width: 1px 0; }
.side button { display: grid; place-items: center; width: 32px; height: 32px; border-radius: 2px; }
.side .on { background: #d7dce4; }
.side button svg { width: 18px; height: 18px; }
.rule { align-self: stretch; height: 1px; margin: auto 4px 14px; background: #dcdfe4; }
.more-tools { width: 20px; height: 8px; }

/* status bar */
.status { display: flex; flex: none; align-items: center; height: 29px; padding-left: 10px; border-top: 1px solid #dfe2e6; background: #f5f7f9; }
.status > .vline { margin: 0 7px; }
.status .after { margin-left: 17px; }
.status .near { margin: 0 8px 0 12px; }
.status > .dd { gap: 2px; margin-left: 10px; }
.status > .dd::after { margin-left: 3px; }
.status > .vline + .dd { margin-left: -3px; }
.views { display: flex; align-items: center; gap: 4px; margin-left: auto; padding-right: 12px; }
.views button { display: grid; place-items: center; width: 22px; height: 24px; }
.views button svg { width: 18px; height: 18px; }
.views .vline { margin: 0 7px; }
.views .on { background: #d7dce4; }
.views .zoom { display: flex; width: 43px; }
.views input { appearance: none; width: 140px; height: 20px; margin: 0 -2px 0 4px; background: linear-gradient(#555d70, #555d70) center / 100% 1px no-repeat; }
.views input::-webkit-slider-thumb { appearance: none; width: 12px; height: 12px; border: 1px solid #3f4759; border-radius: 6px; background: #f5f7f9; }

/* dialog window */
.dialog { position: absolute; left: 664px; top: 284px; width: 547px; border: 1px solid #707070; background: #f0f0f0; color: #111; z-index: 2; }
.dialog > header { display: flex; align-items: center; gap: 5px; height: 25px; padding: 0 7px 0 3px; background: #fff; }
.dialog-body { padding: 7px 8px 8px; }
.tabs { display: flex; align-items: flex-end; height: 24px; margin-bottom: -1px; }
.tabs button { width: 64px; height: 23px; border: 1px solid #dadada; border-bottom: 0; }
.tabs .on { position: relative; height: 24px; background: #fff; }
.sheet { width: 529px; padding: 8px 8px 9px 6px; border: 1px solid #dadada; background: #fff; }
.field { display: grid; grid-template-columns: 75px 1fr; align-items: center; height: 23px; }
.info { margin: 3px 0 26px; }
.combo { display: flex; align-items: center; height: 23px; padding-right: 3px; border: 1px solid #707070; }
.combo input { flex: 1; border: 0; outline: 0; background: none; }
.combo svg { width: 10px; height: 7px; }
.formats { display: flex; gap: 8px; margin: 53px 0 0 1px; }
.btn { display: flex; align-items: center; justify-content: center; gap: 8px; width: 77px; height: 30px; border: 1px solid #adadad; background: #e1e1e1; }
.btn .down { border-width: 4px; border-top: 4px solid #000; border-bottom: 0; }
.btn svg { width: 8px; height: 10px; fill: #111; stroke: none; }
.adv { width: 108px; padding-right: 4px; }
.fmt { justify-content: flex-end; padding-right: 5px; gap: 12px; }
.special { width: 83px; gap: 2px; border-color: #1b5487; background: #cce4f7; }
.anchor { position: relative; }
.popup { position: absolute; left: 0; top: 31px; width: 137px; margin: 0; padding: 1px; border: 1px solid #d2d4d8; background: #fff; list-style: none; color: #29334b; z-index: 3; }
.popup li { height: 27px; padding-left: 32px; line-height: 27px; }
.popup .on { background: #e6e9ee; }
.actions { display: flex; gap: 8px; margin-top: 9px; }
.actions.last { align-items: center; margin-top: 8px; }
.actions a { display: flex; align-items: center; gap: 5px; margin: 0 auto 0 2px; color: #4a90e2; }
.off { border-color: #bfbfbf; background: #ccc; color: #9c9c9c; }
.next, .prev { width: 82px; }

/* overlays */
.pointer { position: absolute; left: 1003px; top: 649px; width: 144px; height: 28px; stroke: none; filter: drop-shadow(1px 3px 2px #8888); z-index: 4; }
.brand { position: absolute; right: 11px; bottom: 8px; display: flex; align-items: center; gap: 2px; opacity: .8; z-index: 4; pointer-events: none; }
.brand svg { width: 42px; height: 40px; stroke: none; }
.brand div { display: flex; flex-direction: column; }
.brand b { color: #68a6df; font-size: 21px; line-height: 26px; }
.brand em { color: #4bb869; font: 700 17px/18px "Liberation Sans", sans-serif; }
.meter { position: absolute; right: 208px; bottom: 43px; display: flex; align-items: center; z-index: 5; color: #fff; }
.rates { width: 92px; height: 42px; margin-right: -32px; padding: 1px 37px 1px 10px; border-radius: 21px 0 0 21px; background: #2d3039f2; box-shadow: 0 1px 4px #0006; }
.rates span { display: flex; align-items: center; height: 20px; }
.rates svg { width: 10px; height: 10px; margin-right: auto; stroke-width: 2; }
.rates b { font-size: 11px; font-weight: 600; }
.rates small { font-size: 9px; color: #a8acb6; }
.dial { display: grid; width: 60px; height: 60px; border-radius: 30px; background: #4b4e5dee; box-shadow: 0 1px 4px #0008; }
.dial svg, .dial > span { grid-area: 1 / 1; }
.dial svg { width: 60px; height: 60px; stroke-width: 2; }
.dial > span { place-self: center; font-size: 24px; line-height: 30px; font-weight: 300; }
.dial small { font-size: 10px; }
```
